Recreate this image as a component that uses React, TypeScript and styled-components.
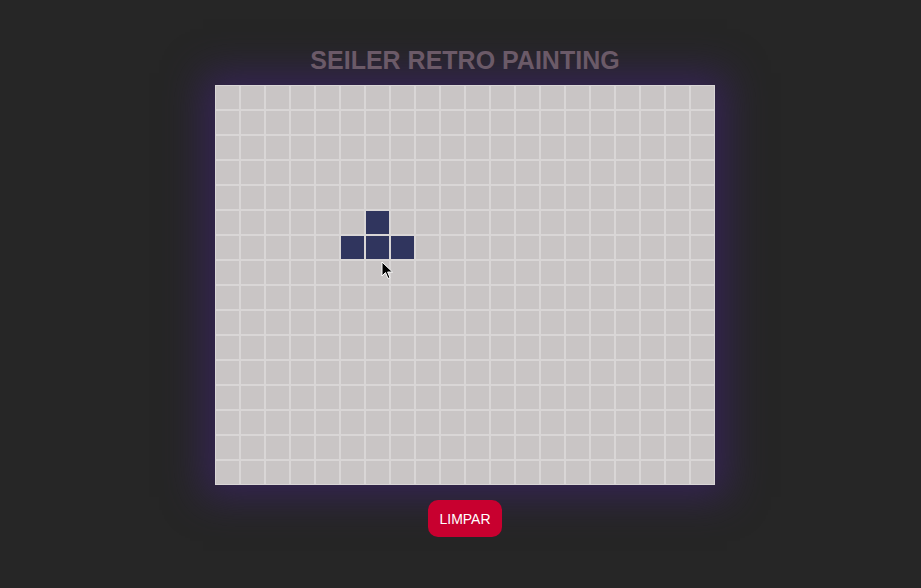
import React, { useState } from 'react';
import styled, { createGlobalStyle } from 'styled-components';

const COLS = 20;
const ROWS = 16;
const CELL = 25;

const GlobalStyle = createGlobalStyle`
  html, body {
    margin: 0;
    padding: 0;
    background: #262626;
    font-family: 'Liberation Sans', Arial, sans-serif;
  }
`;

const Page = styled.main`
  min-height: 588px;
  box-sizing: border-box;
  padding: 46px 0 0 9px;
  display: flex;
  flex-direction: column;
  align-items: center;
`;

const Title = styled.h1`
  position: relative;
  z-index: 1;
  margin: 0 0 10px;
  font-size: 25px;
  line-height: 29px;
  font-weight: 700;
  color: #6b5a68;
  white-space: nowrap;
`;

const Board = styled.div`
  position: relative;
  display: grid;
  grid-template-columns: repeat(${COLS}, ${CELL}px);
  grid-template-rows: repeat(${ROWS}, ${CELL}px);
  box-shadow: 0 0 36px 12px rgba(54, 36, 86, 0.95);
`;

const Cell = styled.div<{ $filled: boolean }>`
  box-sizing: border-box;
  width: ${CELL}px;
  height: ${CELL}px;
  border: 1px solid #d9d6d6;
  background: ${({ $filled }) => ($filled ? '#30355e' : '#c9c5c5')};
  cursor: pointer;
`;

const Pointer = styled.svg`
  position: absolute;
  left: 166px;
  top: 176px;
  width: 13px;
  height: 19px;
  pointer-events: none;
`;

const ClearButton = styled.button`
  position: relative;
  z-index: 1;
  margin-top: 15px;
  height: 37px;
  padding: 0 11px;
  border: none;
  border-radius: 10px;
  background: #c8002f;
  color: #ffffff;
  font-family: 'Liberation Sans', Arial, sans-serif;
  font-size: 14px;
  cursor: pointer;
`;

const initial = new Set(['5-6', '6-5', '6-6', '6-7']);

export default function App() {
  const [painted, setPainted] = useState<Set<string>>(initial);

  const toggle = (key: string) => {
    const next = new Set(painted);
    if (next.has(key)) next.delete(key);
    else next.add(key);
    setPainted(next);
  };

  const cells = [];
  for (let r = 0; r < ROWS; r++) {
    for (let c = 0; c < COLS; c++) {
      const key = `${r}-${c}`;
      cells.push(<Cell key={key} $filled={painted.has(key)} onClick={() => toggle(key)} />);
    }
  }

  return (
    <>
      <GlobalStyle />
      <Page>
        <Title>SEILER RETRO PAINTING</Title>
        <Board>
          {cells}
          <Pointer viewBox="0 0 13 19">
            <path d="M1 1 L1 15 L4.5 11.5 L7 17.5 L9 16.6 L6.6 11 L11.5 11 Z" fill="#000" stroke="#fff" strokeWidth="1" strokeLinejoin="round" />
          </Pointer>
        </Board>
        <ClearButton onClick={() => setPainted(new Set())}>LIMPAR</ClearButton>
      </Page>
    </>
  );
}
